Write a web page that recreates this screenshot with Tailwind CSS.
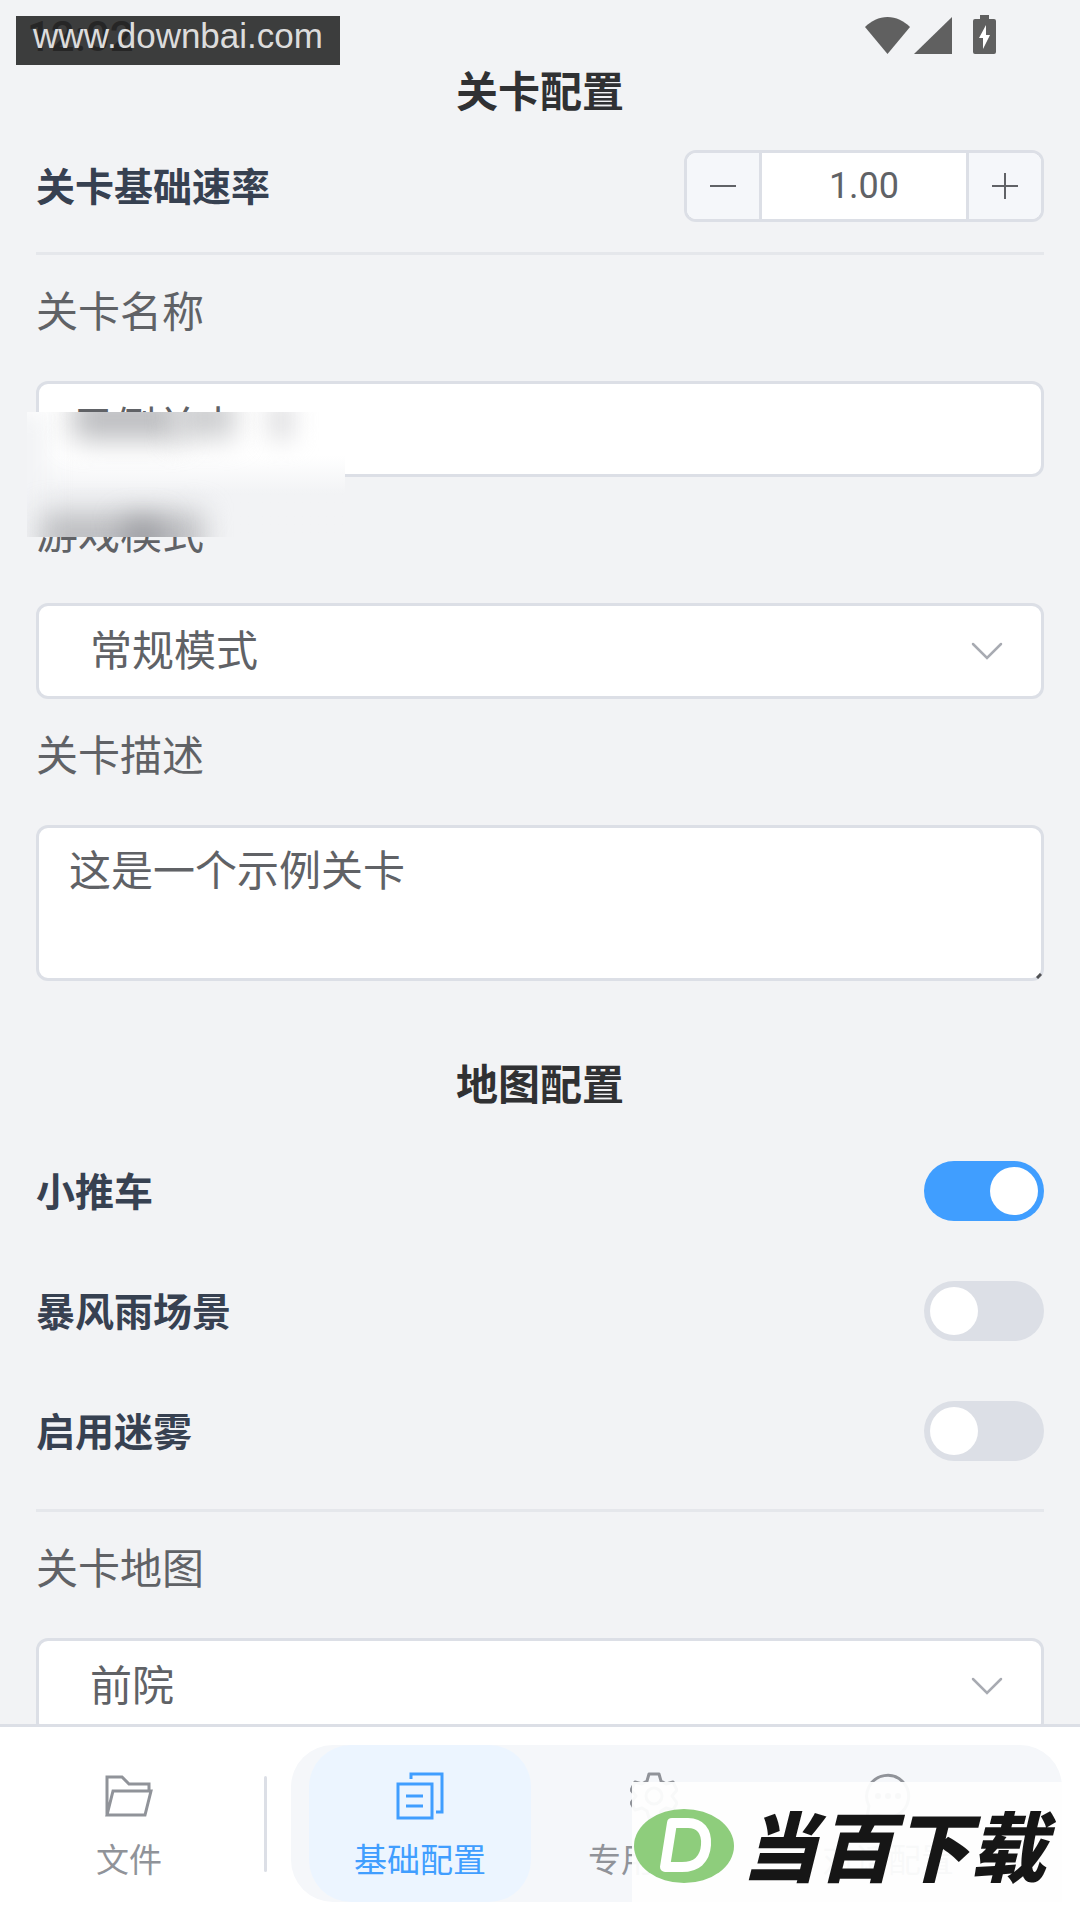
<!DOCTYPE html>
<html lang="zh-CN">
<head>
  <meta charset="UTF-8" />
  <meta name="viewport" content="width=device-width, initial-scale=1" />
  <title>关卡配置</title>
  <script src="https://cdn.jsdelivr.net/npm/@tailwindcss/browser@4"></script>
</head>
<body class="relative flex h-screen flex-col overflow-hidden bg-[#f2f3f5] font-[Roboto,'Noto_Sans_CJK_SC',sans-serif] text-[42px] text-[#606266]">

  <!-- Status bar -->
  <header class="relative h-14 shrink-0">
    <span class="absolute left-[27px] top-[12px] text-[42px] leading-[50px] font-medium text-[#606060]">12:02</span>
    <div class="absolute right-[84px] top-[15px] flex items-end">
      <svg class="h-[37px] w-[45px]" viewBox="0 0 45 37" fill="#606060"><path d="M0 10C6 4 14 0 22.500 0S39 4 45 10L22.500 37Z"/></svg>
      <svg class="ml-1 h-[37px] w-[38px]" viewBox="0 0 38 37" fill="#606060"><path d="M38 0V37H0Z"/></svg>
      <svg class="ml-[21px] h-[39px] w-[23px]" viewBox="0 0 23 39"><path fill="#606060" d="M7 0H16V4H21Q23 4 23 6V37Q23 39 21 39H2Q0 39 0 37V6Q0 4 2 4H7Z"/><path fill="#fff" d="M13 10V20H17L10 34V23H6Z"/></svg>
    </div>
    <!-- site mark -->
    <div class="absolute left-4 top-4 flex h-[49px] w-[324px] justify-center bg-[#1c1c1c]/85 font-['Liberation_Sans',sans-serif] text-[35px] leading-[40px] text-[#dcdcdc]">www.downbai.com</div>
  </header>

  <main class="flex-1 overflow-y-auto px-9 [scrollbar-width:none]">
    <h2 class="flex h-[72px] items-center justify-center font-bold text-[#303133]">关卡配置</h2>

    <div class="mt-[22px] flex h-[72px] items-center justify-between">
      <label for="speed" class="pt-1 text-[39px] font-bold text-[#374151]">关卡基础速率</label>
      <div class="flex h-full w-[360px] overflow-hidden rounded-xl border-3 border-[#dcdfe6] bg-white">
        <button type="button" aria-label="减少" onclick="step(-0.1)" class="flex w-[75px] items-center justify-center border-r-3 border-[#dcdfe6] bg-[#f5f7fa]">
          <svg class="h-[26px] w-[26px]" viewBox="0 0 26 26" stroke="#606266" stroke-width="2"><path d="M0 13H26"/></svg>
        </button>
        <input id="speed" type="text" value="1.00" class="min-w-0 flex-1 text-center text-[36px] outline-none" />
        <button type="button" aria-label="增加" onclick="step(0.1)" class="flex w-[75px] items-center justify-center border-l-3 border-[#dcdfe6] bg-[#f5f7fa]">
          <svg class="h-[26px] w-[26px]" viewBox="0 0 26 26" stroke="#606266" stroke-width="2"><path d="M0 13H26M13 0V26"/></svg>
        </button>
      </div>
    </div>

    <hr class="mt-[30px] border-t-3 border-[#e5e7eb]" />

    <div class="relative">
      <label for="name" class="mt-6 mb-9 flex h-[66px] items-center">关卡名称</label>
      <input id="name" type="text" value="示例关卡 1" class="block h-24 w-full rounded-xl border-3 border-[#dcdfe6] bg-white px-[33px] pb-3 outline-none" />
      <label for="mode" class="mt-6 mb-9 flex h-[66px] items-center">游戏模式</label>
      <!-- frosted patch -->
      <div class="absolute -left-[9px] top-[133px] h-[125px] w-[318px] overflow-hidden bg-linear-to-b from-white from-35% to-[#f2f3f5] to-65%">
        <div class="absolute -left-5 top-0 h-full w-10 bg-[#f2f3f5] blur-md"></div>
        <div class="absolute left-[46px] -top-4 h-[44px] w-[108px] bg-[#bcbdc0] blur-[14px]"></div>
        <div class="absolute left-[148px] -top-4 h-[42px] w-[60px] bg-[#cbccce] blur-[14px]"></div>
        <div class="absolute left-[242px] -top-3 h-[40px] w-[24px] bg-[#dedee0] blur-md"></div>
        <div class="absolute left-[14px] top-[100px] h-12 w-[162px] bg-[#bdbec1] blur-[14px]"></div>
        <div class="absolute left-[96px] top-[108px] h-10 w-[40px] bg-[#9c9da2] blur-[14px]"></div>
      </div>
    </div>
    <div class="relative">
      <select id="mode" class="block h-24 w-full appearance-none rounded-xl border-3 border-[#dcdfe6] bg-white px-[51px] outline-none">
        <option>常规模式</option>
      </select>
      <svg class="pointer-events-none absolute right-[41px] top-[39px] h-[18px] w-[32px]" viewBox="0 0 32 18" fill="none" stroke="#a8abb2" stroke-width="2.500" stroke-linecap="round"><path d="M2 2L16 16L30 2"/></svg>
    </div>

    <label for="desc" class="mt-6 mb-9 flex h-[66px] items-center">关卡描述</label>
    <div class="relative">
      <textarea id="desc" class="block h-[156px] w-full resize-none rounded-xl border-3 border-[#dcdfe6] bg-white px-[30px] pt-3.5 leading-[60px] outline-none">这是一个示例关卡</textarea>
      <svg class="absolute right-[2px] bottom-[2px] h-[6px] w-[6px]" viewBox="0 0 6 6" stroke="#505154" stroke-width="3"><path d="M1 5L5 1"/></svg>
    </div>

    <h2 class="mt-[68px] flex h-[72px] items-center justify-center font-bold text-[#303133]">地图配置</h2>

    <div class="mt-[10px] text-[39px] font-bold text-[#374151]">
      <label class="flex h-[120px] items-center justify-between"><span class="pt-1">小推车</span>
        <input type="checkbox" role="switch" checked class="h-[60px] w-[120px] appearance-none rounded-full bg-[#dcdfe6] p-[6px] before:block before:size-12 before:rounded-full before:bg-white checked:bg-[#409eff] checked:before:ml-auto" />
      </label>
      <label class="flex h-[120px] items-center justify-between"><span class="pt-1">暴风雨场景</span>
        <input type="checkbox" role="switch" class="h-[60px] w-[120px] appearance-none rounded-full bg-[#dcdfe6] p-[6px] before:block before:size-12 before:rounded-full before:bg-white checked:bg-[#409eff] checked:before:ml-auto" />
      </label>
      <label class="flex h-[120px] items-center justify-between"><span class="pt-1">启用迷雾</span>
        <input type="checkbox" role="switch" class="h-[60px] w-[120px] appearance-none rounded-full bg-[#dcdfe6] p-[6px] before:block before:size-12 before:rounded-full before:bg-white checked:bg-[#409eff] checked:before:ml-auto" />
      </label>
    </div>

    <hr class="mt-[18px] border-t-3 border-[#e5e7eb]" />

    <label for="map" class="mt-6 mb-9 flex h-[66px] items-center">关卡地图</label>
    <div class="relative">
      <select id="map" class="block h-24 w-full appearance-none rounded-xl border-3 border-[#dcdfe6] bg-white px-[51px] outline-none">
        <option>前院</option>
      </select>
      <svg class="pointer-events-none absolute right-[41px] top-[39px] h-[18px] w-[32px]" viewBox="0 0 32 18" fill="none" stroke="#a8abb2" stroke-width="2.500" stroke-linecap="round"><path d="M2 2L16 16L30 2"/></svg>
    </div>
  </main>

  <!-- Bottom tabs -->
  <nav class="relative flex shrink-0 items-center border-t-3 border-[#dcdfe6] bg-white pt-[18px] pr-[18px] pb-[18px] text-[33px] leading-[42px] text-[#909399]">
    <button type="button" class="flex h-[157px] w-[258px] shrink-0 flex-col items-center pt-[27px]">
      <svg class="size-12" viewBox="0 0 48 48" fill="none" stroke="currentColor" stroke-width="3"><path d="M2 43V5H17L24 12H44V19M2 43L8 19H46L40 43Z"/></svg>
      <span class="mt-5">文件</span>
    </button>
    <div class="mx-[6px] h-24 w-[3px] shrink-0 rounded-full bg-[#dcdfe6]"></div>
    <div class="ml-[18px] flex h-[157px] min-w-0 flex-1 gap-3 overflow-hidden rounded-[42px] bg-[#f5f7fa] pl-[18px]">
      <button type="button" class="flex w-[222px] shrink-0 flex-col items-center rounded-[42px] bg-[#ecf5ff] pt-[27px] text-[#409eff]">
        <svg class="size-12" viewBox="0 0 48 48" fill="none" stroke="currentColor" stroke-width="3"><path d="M2 12H36V46H2ZM15 7V2H46V40H40M10 24H27M10 34H27"/></svg>
        <span class="mt-5">基础配置</span>
      </button>
      <button type="button" class="flex w-[222px] shrink-0 flex-col items-center pt-[27px]">
        <svg class="size-12" viewBox="0 0 48 48" fill="none" stroke="currentColor" stroke-width="3" stroke-linejoin="round"><path d="M19 2H29L31 9L36 12L43 10L47 18L42 24L47 31L43 38L36 36L31 39L29 46H19L17 39L12 36L5 38L1 31L6 24L1 18L5 10L12 12L17 9Z"/><circle cx="24" cy="24" r="8"/></svg>
        <span class="mt-5">专用配置</span>
      </button>
      <button type="button" class="flex w-[222px] shrink-0 flex-col items-center pt-[27px]">
        <svg class="size-12" viewBox="0 0 48 48" fill="none" stroke="currentColor" stroke-width="3"><path d="M3 45L5 34A21 21 0 1 1 14 43Z"/><g fill="currentColor" stroke="none"><circle cx="14" cy="24" r="3"/><circle cx="24" cy="24" r="3"/><circle cx="34" cy="24" r="3"/></g></svg>
        <span class="mt-5">对话配置</span>
      </button>
    </div>

    <!-- download site badge -->
    <div class="absolute right-[18px] bottom-[18px] flex h-[120px] w-[430px] items-center bg-[#fefefe]/95 pt-2">
      <svg class="ml-[2px] h-[74px] w-[100px] shrink-0" viewBox="0 0 100 74"><ellipse cx="50" cy="37" rx="50" ry="37" fill="#8ecd7c"/><path d="M38 14H54C66 14 73 22 72 36C71 51 62 58 48 58H31Z" fill="none" stroke="#fff" stroke-width="10" stroke-linejoin="round"/></svg>
      <span class="ml-2 pt-2 text-[76px] leading-[76px] font-black whitespace-nowrap text-[#161616] italic">当百下载</span>
    </div>
  </nav>

  <script>
    function step(delta) {
      const input = document.getElementById("speed");
      input.value = (parseFloat(input.value) + delta).toFixed(2);
    }
  </script>
</body>
</html>
